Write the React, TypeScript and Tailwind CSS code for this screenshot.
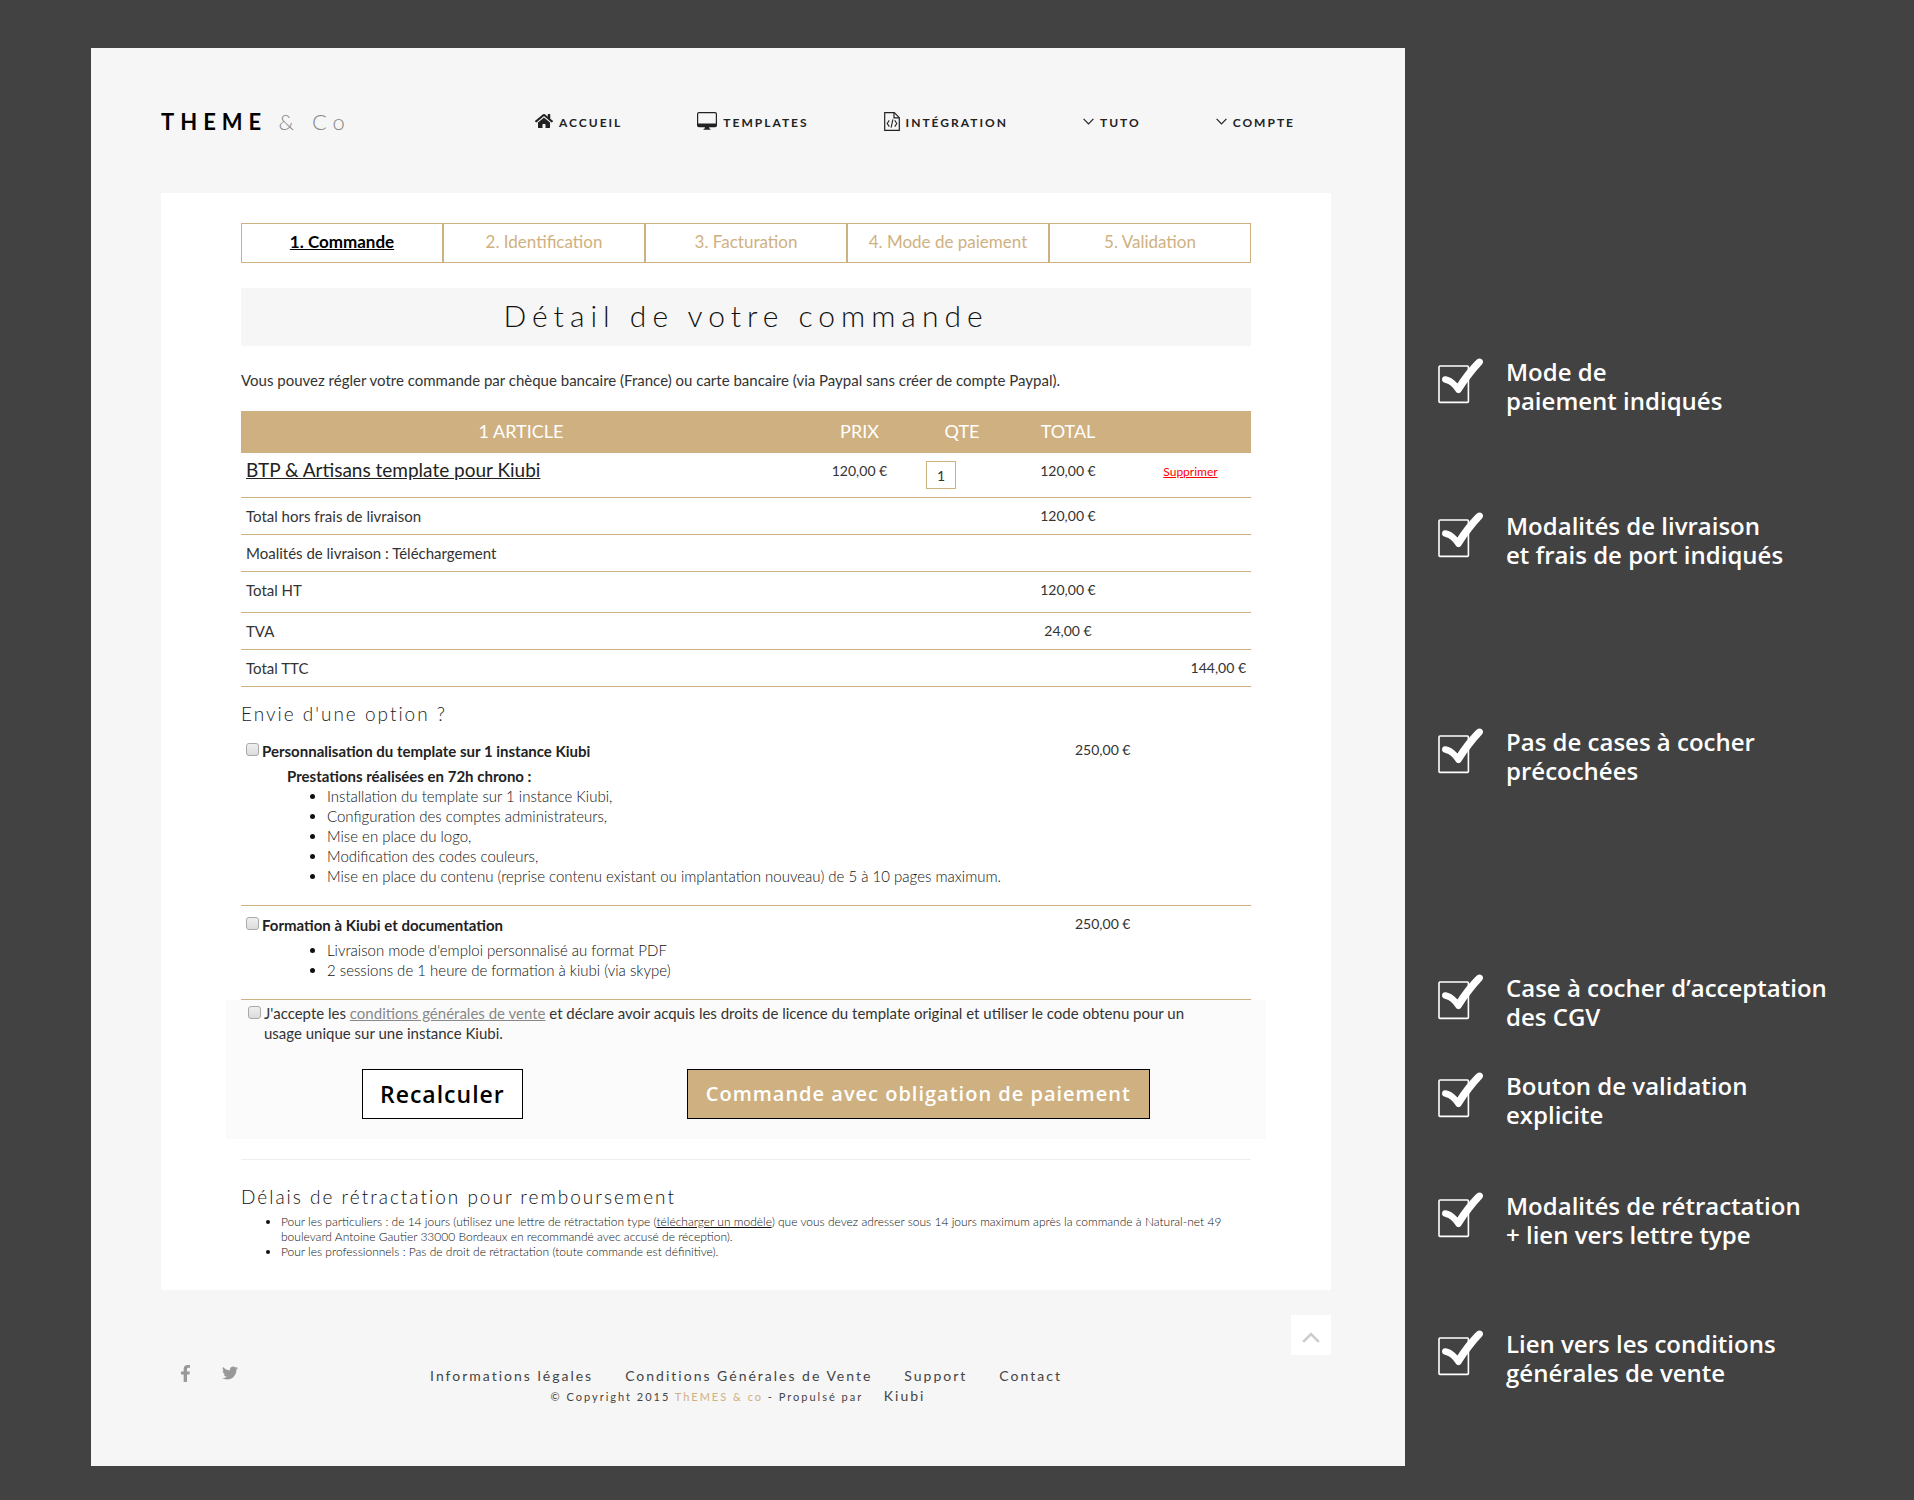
import { FaFacebookF, FaHome, FaTwitter } from "react-icons/fa"

const steps = ["1. Commande", "2. Identification", "3. Facturation", "4. Mode de paiement", "5. Validation"]

const totals = [
  { label: "Total hors frais de livraison", total: "120,00 €", last: "", cell: "pb-2" },
  { label: "Moalités de livraison : Téléchargement", total: "", last: "", cell: "pb-2" },
  { label: "Total HT", total: "120,00 €", last: "", cell: "pb-3" },
  { label: "TVA", total: "24,00 €", last: "", cell: "pb-2" },
  { label: "Total TTC", total: "", last: "144,00 €", cell: "pb-2" },
]

const options = [
  {
    id: "perso",
    title: "Personnalisation du template sur 1 instance Kiubi",
    intro: "Prestations réalisées en 72h chrono :",
    price: "250,00 €",
    items: [
      "Installation du template sur 1 instance Kiubi,",
      "Configuration des comptes administrateurs,",
      "Mise en place du logo,",
      "Modification des codes couleurs,",
      "Mise en place du contenu (reprise contenu existant ou implantation nouveau) de 5 à 10 pages maximum.",
    ],
  },
  {
    id: "formation",
    title: "Formation à Kiubi et documentation",
    intro: "",
    price: "250,00 €",
    items: ["Livraison mode d'emploi personnalisé au format PDF", "2 sessions de 1 heure de formation à kiubi (via skype)"],
  },
]

const notes = [
  { lines: ["Mode de", "paiement indiqués"], space: "mt-[309px]" },
  { lines: ["Modalités de livraison", "et frais de port indiqués"], space: "mt-24" },
  { lines: ["Pas de cases à cocher", "précochées"], space: "mt-[158px]" },
  { lines: ["Case à cocher d’acceptation", "des CGV"], space: "mt-[188px]" },
  { lines: ["Bouton de validation", "explicite"], space: "mt-10" },
  { lines: ["Modalités de rétractation", "+ lien vers lettre type"], space: "mt-[62px]" },
  { lines: ["Lien vers les conditions", "générales de vente"], space: "mt-20" },
]

const checkboxClass =
  "mt-[3px] h-[13px] w-[13px] shrink-0 appearance-none rounded-[3px] border border-[#a9a9a9] bg-linear-to-b from-[#efefef] to-[#dcdcdc] checked:bg-none checked:bg-[#cfb181]"

function DesktopIcon() {
  return (
    <svg width="20" height="18" viewBox="0 0 20 18" className="mb-1" aria-hidden="true">
      <rect x="0.6" y="0.6" width="18.8" height="14" rx="1.4" fill="none" stroke="#222" strokeWidth="1.2" />
      <path d="M0.6 11.4h18.8v2.2q0 1.2-1.2 1.2H1.8q-1.2 0-1.2-1.2z" fill="#222" />
      <path d="M8 14.5h4l.3 1.9 1.2.5v.9h-7v-.9l1.2-.5z" fill="#222" />
    </svg>
  )
}

function CodeFileIcon() {
  return (
    <svg width="16" height="19" viewBox="0 0 16 19" fill="none" stroke="#222" strokeWidth="1.2" className="mb-1" aria-hidden="true">
      <path d="M0.7 0.7h9.6l5 5v12.6H0.7z" />
      <path d="M10 0.9v5h5.2" />
      <path d="M5.3 8.4L3.2 11.5l2.1 3.1M10.7 8.4l2.1 3.1-2.1 3.1M8.9 7.4l-1.8 8.2" strokeWidth="1.1" />
    </svg>
  )
}

function ChevronDown() {
  return (
    <svg width="11" height="7" viewBox="0 0 11 7" fill="none" stroke="#222" strokeWidth="1.2" className="mb-1" aria-hidden="true">
      <path d="M0.6 0.8l4.9 5 4.9-5" />
    </svg>
  )
}

function CheckIcon() {
  return (
    <svg width="46" height="46" viewBox="0 0 46 46" fill="none" className="mt-px shrink-0" aria-hidden="true">
      <rect x="1" y="8" width="29.4" height="36.4" rx="1" stroke="#fff" strokeWidth="1.6" />
      <path
        d="M4 21.5c0-2.4 1.6-3.6 3.8-3.3 3.6.4 7.4 2.8 11.7 7.3C26 15.5 32 8.5 38.9 1.6c1.5-1.5 3.6-1.5 4.9-.4 1.6 1.4 1.6 3.5.3 5C36 15 29.5 23.6 23.2 33.5c-1.4 2.2-4 2.2-5.4.1-3.2-4.8-6.3-7.9-10.2-8.6C5.3 24.6 4 23.4 4 21.5z"
        fill="#fff"
      />
    </svg>
  )
}

const menu = [
  { label: "ACCUEIL", icon: <FaHome size={18} className="mb-1" /> },
  { label: "TEMPLATES", icon: <DesktopIcon /> },
  { label: "INTÉGRATION", icon: <CodeFileIcon /> },
  { label: "TUTO", icon: <ChevronDown /> },
  { label: "COMPTE", icon: <ChevronDown /> },
]

function Header() {
  return (
    <header className="flex items-center justify-between pt-[58px] pb-[55px]">
      <a href="#" className="text-[22px] leading-8 font-bold tracking-[6px] text-black">
        THEME <span className="font-light text-[#888]">& Co</span>
      </a>
      <nav className="flex h-8 items-center gap-[75px] pt-0.5 pr-9">
        {menu.map((item) => (
          <a key={item.label} href="#" className="flex items-center gap-1.5 text-xs font-bold tracking-[2px] text-[#222]">
            {item.icon}
            {item.label}
          </a>
        ))}
      </nav>
    </header>
  )
}

function Cart() {
  return (
    <table className="mt-[21px] w-full table-fixed border-collapse">
      <colgroup>
        <col />
        <col className="w-[117px]" />
        <col className="w-[88px]" />
        <col className="w-[124px]" />
        <col className="w-[121px]" />
      </colgroup>
      <thead>
        <tr className="h-[42px] bg-[#cfb181] text-lg text-white">
          <th className="pb-0.5 font-normal">1 ARTICLE</th>
          <th className="pb-0.5 font-normal">PRIX</th>
          <th className="pb-0.5 font-normal">QTE</th>
          <th className="pb-0.5 font-normal">TOTAL</th>
          <th></th>
        </tr>
      </thead>
      <tbody className="text-sm leading-5">
        <tr className="border-b border-[#cfb181] align-top">
          <td className="px-[5px] py-2">
            <a href="#" className="block text-[19px] leading-[18px] text-[#222] underline">
              BTP & Artisans template pour Kiubi
            </a>
          </td>
          <td className="py-2 text-center">120,00 €</td>
          <td className="px-2 py-2">
            <input
              type="text"
              defaultValue="1"
              aria-label="Quantité"
              className="block h-7 w-[30px] border border-[#cfb181] bg-white text-center"
            />
          </td>
          <td className="py-2 text-center">120,00 €</td>
          <td className="py-2 text-center">
            <a href="#" className="text-xs text-[#f00] underline">
              Supprimer
            </a>
          </td>
        </tr>
        {totals.map((row) => (
          <tr key={row.label} className="border-b border-[#cfb181] align-top">
            <td className={`px-[5px] pt-2 text-[15px] ${row.cell}`}>{row.label}</td>
            <td></td>
            <td></td>
            <td className="pt-2 text-center">{row.total}</td>
            <td className="px-[5px] pt-2 text-right">{row.last}</td>
          </tr>
        ))}
      </tbody>
    </table>
  )
}

function Options() {
  return (
    <section>
      <h2 className="mt-[13px] mb-1 text-[19px] leading-7 font-light tracking-[2px] text-[#222]">Envie d'une option ?</h2>
      {options.map((option) => (
        <div key={option.id} className="flex border-b border-[#cfb181] pt-2 pb-[19px]">
          <div className="flex-1 pl-[5px] text-[#222]">
            <div className="mb-1 flex gap-[3px]">
              <input id={option.id} type="checkbox" className={checkboxClass} />
              <label htmlFor={option.id} className="leading-[22px] font-bold">
                {option.title}
              </label>
            </div>
            {option.intro && <p className="pl-[41px] font-bold">{option.intro}</p>}
            <ul className="list-disc pl-[81px] font-light text-[#111]">
              {option.items.map((item) => (
                <li key={item}>{item}</li>
              ))}
            </ul>
          </div>
          <div className="w-44 text-sm leading-5">{option.price}</div>
        </div>
      ))}
    </section>
  )
}

function Validation() {
  return (
    <section className="-mx-[15px] bg-[#fbfbfb] pt-[3px] pb-5">
      <div className="flex gap-[3px] pr-14 pl-[22px]">
        <input id="cgv" type="checkbox" className={checkboxClass} />
        <label htmlFor="cgv">
          J'accepte les{" "}
          <a href="#" className="text-[#888] underline">
            conditions générales de vente
          </a>{" "}
          et déclare avoir acquis les droits de licence du template original et utiliser le code obtenu pour un usage unique
          sur une instance Kiubi.
        </label>
      </div>
      <div className="mt-[26px] flex gap-[164px] pl-[136px] font-['Open_Sans',sans-serif] font-semibold tracking-[1px]">
        <button type="button" className="h-[50px] border border-black bg-white px-[17px] text-[23px] text-black">
          Recalculer
        </button>
        <button type="submit" className="h-[50px] border border-black bg-[#cfb181] px-[18px] text-xl text-white">
          Commande avec obligation de paiement
        </button>
      </div>
    </section>
  )
}

function Refund() {
  return (
    <section className="mt-5 border-t border-[#eee] pb-px text-[#111]">
      <h2 className="mt-[23px] text-[19px] leading-7 font-light tracking-[2px]">Délais de rétractation pour remboursement</h2>
      <ul className="mt-[3px] list-disc pr-5 pl-10 text-xs leading-[15px] font-light">
        <li>
          Pour les particuliers : de 14 jours (utilisez une lettre de rétractation type (
          <a href="#" className="underline">
            télécharger un modèle
          </a>
          ) que vous devez adresser sous 14 jours maximum après la commande à Natural-net 49 boulevard Antoine Gautier 33000
          Bordeaux en recommandé avec accusé de réception).
        </li>
        <li>Pour les professionnels : Pas de droit de rétractation (toute commande est définitive).</li>
      </ul>
    </section>
  )
}

function Footer() {
  const links = ["Informations légales", "Conditions Générales de Vente", "Support", "Contact"]

  return (
    <footer className="pt-[25px] pb-[59px]">
      <button type="button" aria-label="Haut de page" className="ml-auto flex h-10 w-10 items-center justify-center bg-white">
        <svg width="18" height="11" viewBox="0 0 18 11" fill="none" stroke="#ccc" strokeWidth="2.6" className="mt-1" aria-hidden="true">
          <path d="M1.2 9.8L9 2l7.8 7.8" />
        </svg>
      </button>
      <div className="mt-[10px] grid grid-cols-[1fr_auto_1fr] tracking-[2px]">
        <div className="flex gap-7 pl-4 text-[#999]">
          <a href="#" aria-label="Facebook">
            <FaFacebookF size={17} />
          </a>
          <a href="#" aria-label="Twitter">
            <FaTwitter size={16} />
          </a>
        </div>
        <div className="text-center text-sm leading-[21px] text-[#444]">
          <nav>
            {links.map((link) => (
              <a key={link} href="#" className="px-4">
                {link}
              </a>
            ))}
          </nav>
          <p className="text-[11px] leading-5">
            © Copyright 2015 <span className="text-[#cfb181]">ThEMES & co</span> - Propulsé par{" "}
            <a href="#" className="px-4 text-sm leading-5">
              Kiubi
            </a>
          </p>
        </div>
      </div>
    </footer>
  )
}

export default function App() {
  return (
    <div className="flex min-h-screen items-start bg-[#424242] pt-12 pb-[34px] pl-[91px] font-['Lato',sans-serif] text-[15px] leading-5 text-[#333]">
      <div className="min-w-0 flex-1 bg-[#f6f6f6] pr-[74px] pl-[70px]">
        <Header />
        <main className="bg-white px-20 py-[30px]">
          <ol className="grid grid-cols-5">
            {steps.map((step, i) => (
              <li
                key={step}
                className={`border border-[#cfb181] pb-0.5 text-center text-[17px] leading-9 ${i === 0 ? "font-bold text-black underline" : "text-[#cfb181]"}`}
              >
                {step}
              </li>
            ))}
          </ol>
          <h1 className="mt-[25px] bg-[#f6f6f6] pb-1 text-center text-[30px] leading-[54px] font-light tracking-[6px] text-[#111]">
            Détail de votre commande
          </h1>
          <p className="mt-6">
            Vous pouvez régler votre commande par chèque bancaire (France) ou carte bancaire (via Paypal sans créer de compte
            Paypal).
          </p>
          <Cart />
          <Options />
          <Validation />
          <Refund />
        </main>
        <Footer />
      </div>
      <aside className="w-[509px] shrink-0 pl-[33px] font-['Open_Sans',sans-serif] text-2xl leading-[29px] font-semibold text-white">
        {notes.map((note) => (
          <div key={note.lines[0]} className={`flex items-start gap-[22px] ${note.space}`}>
            <CheckIcon />
            <p>
              {note.lines[0]}
              <br />
              {note.lines[1]}
            </p>
          </div>
        ))}
      </aside>
    </div>
  )
}
